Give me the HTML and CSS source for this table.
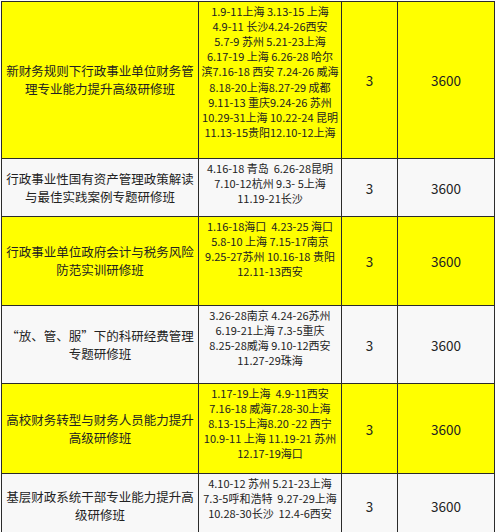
FILE: index.html
```html
<!DOCTYPE html>
<html lang="zh">
<head>
<meta charset="utf-8">
<link rel="stylesheet" href="styles.css">
</head>
<body>
<table class="plan">
  <colgroup>
    <col class="c-name"><col class="c-date"><col class="c-days"><col class="c-price">
  </colgroup>
  <tr class="r1 yellow">
    <td class="name">新财务规则下行政事业单位财务管<br>理专业能力提升高级研修班</td>
    <td class="date">1.9-11上海 3.13-15 上海<br>4.9-11 长沙4.24-26西安<br>5.7-9 苏州 5.21-23上海<br>6.17-19 上海 6.26-28 哈尔<br>滨7.16-18 西安 7.24-26 威海<br>8.18-20上海8.27-29 成都<br>9.11-13 重庆9.24-26 苏州<br>10.29-31上海 10.22-24 昆明<br>11.13-15贵阳12.10-12上海</td>
    <td class="num">3</td>
    <td class="num">3600</td>
  </tr>
  <tr class="r2 white">
    <td class="name">行政事业性国有资产管理政策解读<br>与最佳实践案例专题研修班</td>
    <td class="date">4.16-18 青岛&nbsp; 6.26-28昆明<br>7.10-12杭州 9.3- 5上海<br>11.19-21长沙</td>
    <td class="num">3</td>
    <td class="num">3600</td>
  </tr>
  <tr class="r3 yellow">
    <td class="name">行政事业单位政府会计与税务风险<br>防范实训研修班</td>
    <td class="date">1.16-18海口&nbsp; 4.23-25 海口<br>5.8-10 上海 7.15-17南京<br>9.25-27苏州 10.16-18 贵阳<br>12.11-13西安</td>
    <td class="num">3</td>
    <td class="num">3600</td>
  </tr>
  <tr class="r4 white">
    <td class="name">“放、管、服”下的科研经费管理<br>专题研修班</td>
    <td class="date">3.26-28南京 4.24-26苏州<br>6.19-21上海 7.3-5重庆<br>8.25-28威海 9.10-12西安<br>11.27-29珠海</td>
    <td class="num">3</td>
    <td class="num">3600</td>
  </tr>
  <tr class="r5 yellow">
    <td class="name">高校财务转型与财务人员能力提升<br>高级研修班</td>
    <td class="date">1.17-19上海&nbsp; 4.9-11西安<br>7.16-18 威海7.28-30上海<br>8.13-15上海8.20 -22 西宁<br>10.9-11 上海 11.19-21 苏州<br>12.17-19海口</td>
    <td class="num">3</td>
    <td class="num">3600</td>
  </tr>
  <tr class="r6 white">
    <td class="name">基层财政系统干部专业能力提升高<br>级研修班</td>
    <td class="date">4.10-12 苏州 5.21-23上海<br>7.3-5呼和浩特&nbsp; 9.27-29上海<br>10.28-30长沙&nbsp; 12.4-6西安</td>
    <td class="num">3</td>
    <td class="num">3600</td>
  </tr>
</table>
</body>
</html>
```
FILE: styles.css
```css
html, body {
  margin: 0;
  padding: 0;
  background: #fdfdfd;
}
body {
  font-family: "Noto Sans CJK SC", "Noto Sans", sans-serif;
  color: #222222;
  overflow: hidden;
}
.plan {
  border-collapse: collapse;
  table-layout: fixed;
  margin: 1px 0 0 1px;
  width: 493px;
}
.plan td {
  border: 1.5px solid #2b2b2b;
  padding: 0;
  text-align: center;
  white-space: nowrap;
  overflow: hidden;
}
.c-name { width: 197px; }
.c-date { width: 143px; }
.c-days { width: 56px; }
.c-price { width: 97px; }

.yellow td { background: #ffff00; }
.white td { background: #f8f8f8; }

.r1 { height: 157px; }
.r2 { height: 58px; }
.r3 { height: 89px; }
.r4 { height: 78px; }
.r5 { height: 90px; }
.r6 { height: 64px; }

.name {
  font-size: 12.5px;
  line-height: 17.7px;
  vertical-align: middle;
}
.date {
  font-size: 11px;
  line-height: 15.2px;
  vertical-align: top;
  padding-top: 1.5px !important;
}
.num {
  font-size: 13.5px;
  vertical-align: middle;
}
```
